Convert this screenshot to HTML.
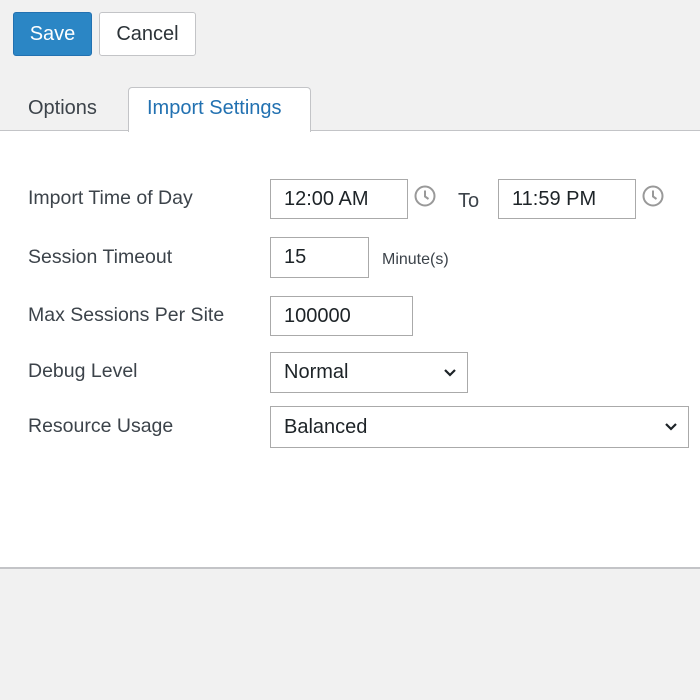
<!DOCTYPE html>
<html><head><style>
*{box-sizing:border-box;margin:0;padding:0}
body{width:700px;height:700px;background:#f1f1f1;position:relative;overflow:hidden;font-family:"Liberation Sans",sans-serif;}
.a{position:absolute}
.btn{position:absolute;border-radius:3px;font-size:20px;display:flex;align-items:center;justify-content:center}
.panel{position:absolute;left:0;top:130px;width:700px;height:439px;background:#fff;border-top:1px solid #c3c4c7;border-bottom:2px solid #c3c4c7}
.lbl{position:absolute;left:28px;font-size:19.5px;color:#3c434a}
.in{position:absolute;background:#fff;border:1px solid #aaa;font-size:20px;color:#1d2327;padding-left:13px;display:flex;align-items:center}
.chev{position:absolute;right:10px;top:50%;margin-top:-5px}
</style></head><body>
<div class="btn" style="left:13px;top:12px;width:79px;height:44px;background:#2b86c5;color:#fff;border:1px solid #2271b1">Save</div>
<div class="btn" style="left:99px;top:12px;width:97px;height:44px;background:#fff;color:#2c3338;border:1px solid #c3c4c7">Cancel</div>
<div class="a" style="left:28px;top:97px;font-size:20px;color:#3c434a">Options</div>
<div class="panel"></div>
<div class="a" style="left:128px;top:87px;width:183px;height:45px;background:#fff;border:1px solid #c3c4c7;border-bottom:none;border-radius:4px 4px 0 0"></div>
<div class="a" style="left:147px;top:97px;font-size:20px;color:#2271b1">Import Settings</div>

<div class="lbl" style="top:187px">Import Time of Day</div>
<div class="lbl" style="top:246px">Session Timeout</div>
<div class="lbl" style="top:304px">Max Sessions Per Site</div>
<div class="lbl" style="top:360px">Debug Level</div>
<div class="lbl" style="top:415px">Resource Usage</div>

<div class="in" style="left:270px;top:179px;width:138px;height:40px">12:00 AM</div>
<svg class="a" style="left:414px;top:185px" width="22" height="22" viewBox="0 0 22 22"><circle cx="11" cy="11" r="9.5" fill="none" stroke="#999" stroke-width="2"/><path d="M11 5.5V11.5L14.5 14" fill="none" stroke="#999" stroke-width="2"/></svg>
<div class="a" style="left:458px;top:190px;font-size:20px;color:#3c434a">To</div>
<div class="in" style="left:498px;top:179px;width:138px;height:40px">11:59 PM</div>
<svg class="a" style="left:642px;top:185px" width="22" height="22" viewBox="0 0 22 22"><circle cx="11" cy="11" r="9.5" fill="none" stroke="#999" stroke-width="2"/><path d="M11 5.5V11.5L14.5 14" fill="none" stroke="#999" stroke-width="2"/></svg>

<div class="in" style="left:270px;top:237px;width:99px;height:41px">15</div>
<div class="a" style="left:382px;top:251px;font-size:16px;color:#3c434a">Minute(s)</div>
<div class="in" style="left:270px;top:296px;width:143px;height:40px">100000</div>
<div class="in" style="left:270px;top:352px;width:198px;height:41px">Normal<svg class="chev" width="14" height="10" viewBox="0 0 14 10"><path d="M2 2L7 7L12 2" fill="none" stroke="#1d2327" stroke-width="2.2"/></svg></div>
<div class="in" style="left:270px;top:406px;width:419px;height:42px">Balanced<svg class="chev" width="14" height="10" viewBox="0 0 14 10"><path d="M2 2L7 7L12 2" fill="none" stroke="#1d2327" stroke-width="2.2"/></svg></div>
</body></html>
